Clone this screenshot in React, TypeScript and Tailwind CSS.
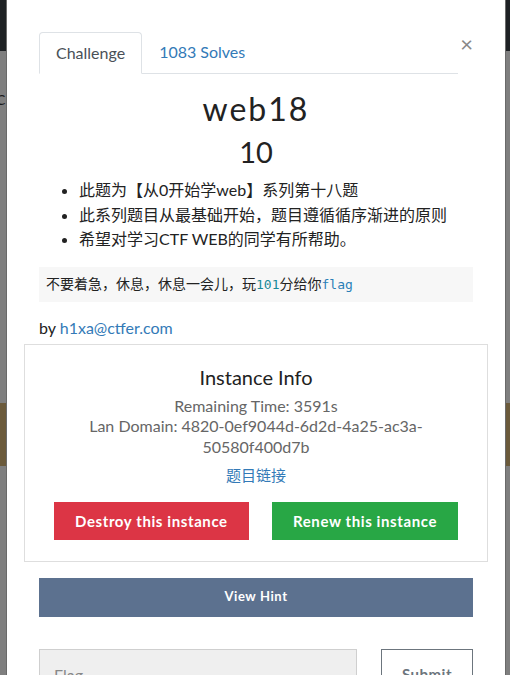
import React from "react";

const font = { fontFamily: '"Lato", "Noto Sans CJK SC", sans-serif' };

const App = () => {
  return (
    <div
      className="relative h-[675px] w-[510px] overflow-hidden bg-[#7f7f7f]"
      style={font}
    >
      {/* dimmed page behind the modal */}
      <div className="flex flex-col">
        <div className="h-[51px] bg-[#1e2124]" />
        <div className="h-[352px] pt-[38px] text-[14px] text-[#1a1a1a]">
          <span className="-ml-[4px]">C</span>
        </div>
        <div className="h-[63px] bg-[#6b5a3b]" />
      </div>

      <div className="absolute top-0 left-[6px] h-full w-[500px] border-x border-[#6a6a6a] bg-white">
        <div className="px-[32px] pt-[32px]">
          {/* tabs + close */}
          <div className="flex items-start">
            <div className="flex flex-1 border-b border-[#dee2e6]">
              <div className="-mb-px rounded-t-[4px] border border-b-white border-[#dee2e6] bg-white px-[16px] py-[8px] text-[16px] leading-6 text-[#495057]">
                Challenge
              </div>
              <div className="px-[17px] py-[8px] text-[16px] leading-6 text-[#337ab7]">
                1083 Solves
              </div>
            </div>
            <div className="w-[15px] text-right text-[22px] leading-6 text-[#888]">
              ×
            </div>
          </div>

          {/* title */}
          <div className="mt-[16px] text-center text-[32px] leading-[38px] tracking-[2px] text-[#222]">
            web18
          </div>
          <div className="mt-[7px] text-center text-[29px] leading-[34px] text-[#222]">
            10
          </div>

          <ul className="mt-[9px] list-disc pl-[40px] text-[16px] leading-[24.5px] text-[#222]">
            <li>此题为【从0开始学web】系列第十八题</li>
            <li>此系列题目从最基础开始，题目遵循循序渐进的原则</li>
            <li>希望对学习CTF WEB的同学有所帮助。</li>
          </ul>

          <div className="mt-[15px] h-[35px] bg-[#f7f7f7] px-[7px] pt-[7px] text-[14px] leading-[20px] text-[#222]">
            不要着急，休息，休息一会儿，玩
            <span
              className="text-[#178a98]"
              style={{ fontFamily: '"DejaVu Sans Mono", monospace', fontSize: 13 }}
            >
              101
            </span>
            分给你
            <span
              className="text-[#2a7fb8]"
              style={{ fontFamily: '"DejaVu Sans Mono", monospace', fontSize: 13 }}
            >
              flag
            </span>
          </div>

          <div className="mt-[15px] text-[16px] leading-[22px] text-[#222]">
            by <span className="text-[#337ab7]">h1xa@ctfer.com</span>
          </div>

          {/* instance */}
          <div className="-mx-[15px] mt-[5px] h-[218px] border border-[#dedede] pt-[19px] text-center">
            <div className="text-[20px] leading-[26px] text-[#222]">
              Instance Info
            </div>
            <div className="mt-[6px] text-[16px] leading-[20.5px] text-[#666]">
              <div>Remaining Time: 3591s</div>
              <div className="px-[60px]">
                Lan Domain: 4820-0ef9044d-6d2d-4a25-ac3a-50580f400d7b
              </div>
            </div>
            <div className="mt-[7px] text-[15px] leading-[22px] text-[#337ab7]">
              题目链接
            </div>
            <div className="mt-[16px] flex justify-between px-[29px]">
              <div className="flex h-[38px] items-center bg-[#dc3545] px-[21px] text-[15px] font-bold tracking-[0.6px] text-white">
                Destroy this instance
              </div>
              <div className="flex h-[38px] items-center bg-[#28a745] px-[21px] text-[15px] font-bold tracking-[0.6px] text-white">
                Renew this instance
              </div>
            </div>
          </div>

          <div className="mt-[16px] flex h-[39px] items-center justify-center bg-[#5c718f] text-[13px] font-bold tracking-[0.6px] text-white">
            View Hint
          </div>

          <div className="mt-[32px] flex justify-between">
            <div className="h-[50px] w-[318px] border border-[#cfcfcf] bg-[#efefef] px-[14px] pt-[13px] text-[16px] text-[#888]">
              Flag
            </div>
            <div className="h-[50px] w-[92px] border border-[#6c757d] bg-white pt-[13px] text-center text-[15px] font-bold tracking-[0.5px] text-[#6c757d]">
              Submit
            </div>
          </div>
        </div>
      </div>
    </div>
  );
};

export default App;
